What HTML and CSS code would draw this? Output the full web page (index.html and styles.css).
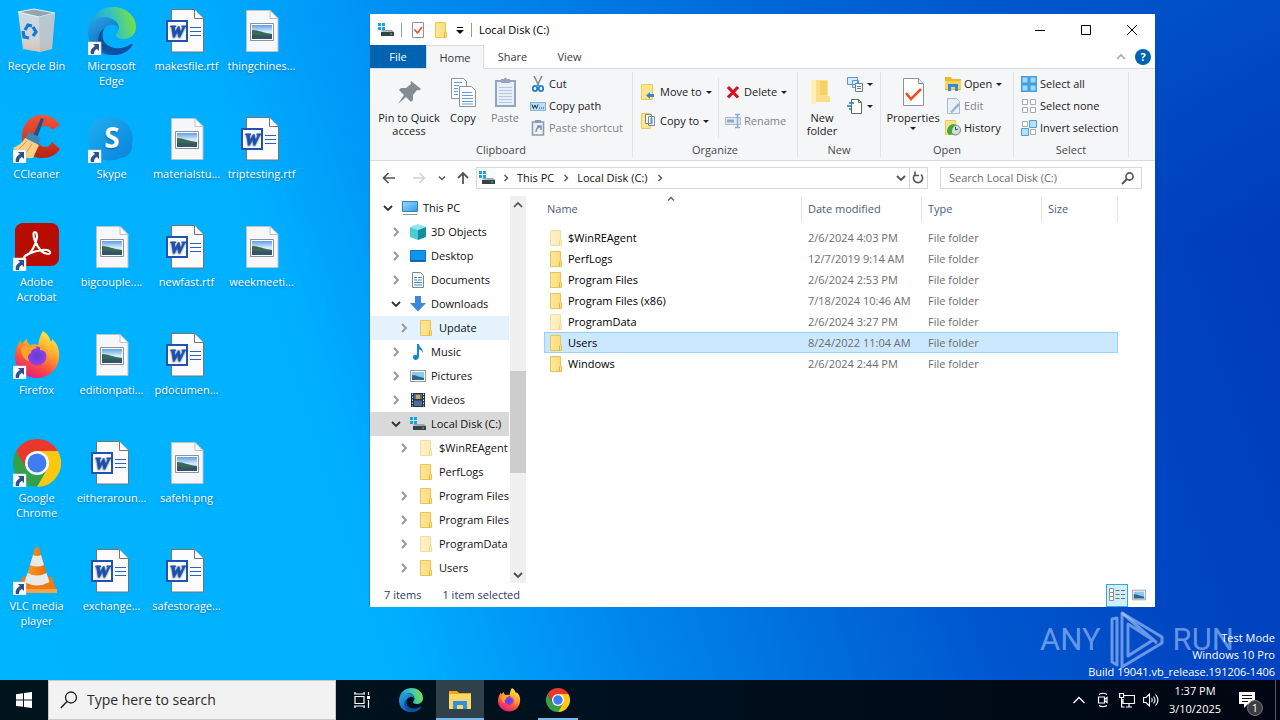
FILE: index.html
```html
<!DOCTYPE html>
<html lang="en">
<head>
<meta charset="utf-8">
<title>Local Disk (C:)</title>
<link rel="stylesheet" href="styles.css">
</head>
<body>
<svg class="sprite" aria-hidden="true">
  <defs>
    <linearGradient id="gEdgeTop" x1="0" x2="1" y1=".6" y2=".4"><stop offset="0" stop-color="#1c9be0"/><stop offset=".5" stop-color="#35c1c0"/><stop offset="1" stop-color="#7be340"/></linearGradient>
    <linearGradient id="gEdgeMid" x1="0" x2=".6" y1="0" y2="1"><stop offset="0" stop-color="#2aa6e6"/><stop offset="1" stop-color="#0b62b8"/></linearGradient>
    <linearGradient id="gFox" x1=".8" x2=".3" y1="0" y2="1"><stop offset="0" stop-color="#fff14a"/><stop offset=".4" stop-color="#ffa52b"/><stop offset=".7" stop-color="#ff4f3e"/><stop offset="1" stop-color="#e31587"/></linearGradient>
    <radialGradient id="gFoxCore"><stop offset="0" stop-color="#5a3fd8"/><stop offset="1" stop-color="#9a3fe0"/></radialGradient>
    <linearGradient id="gSkype" x1="0" x2="1" y1="0" y2="1"><stop offset="0" stop-color="#1fb0f2"/><stop offset="1" stop-color="#0883dc"/></linearGradient>
    <linearGradient id="gBin" x1="0" x2="0" y1="0" y2="1"><stop offset="0" stop-color="#c9dbe6"/><stop offset=".7" stop-color="#cfd4d6"/><stop offset="1" stop-color="#d9c3b4"/></linearGradient>
    <linearGradient id="gRed" x1="0" x2="0" y1="0" y2="1"><stop offset="0" stop-color="#f4553a"/><stop offset="1" stop-color="#b8230f"/></linearGradient>
    <linearGradient id="gCone" x1="0" x2="1"><stop offset="0" stop-color="#ff9d2b"/><stop offset="1" stop-color="#e86800"/></linearGradient>
    <linearGradient id="gSky" x1="0" x2="0" y1="0" y2="1"><stop offset="0" stop-color="#5f9fe6"/><stop offset=".5" stop-color="#dcefff"/><stop offset="1" stop-color="#8fb8d8"/></linearGradient>
    <linearGradient id="gFolder" x1="0" x2="1"><stop offset="0" stop-color="#ffe79c"/><stop offset="1" stop-color="#fbdb78"/></linearGradient>
    <linearGradient id="gScreen" x1="0" x2="1" y1="0" y2="1"><stop offset="0" stop-color="#9adcff"/><stop offset="1" stop-color="#2a9df0"/></linearGradient>
  </defs>

  <symbol id="shortcut" viewBox="0 0 48 48"><path d="M0 35h13v13H0z" fill="#fff" stroke="#c9d3dc" stroke-width=".6"/><path d="M5 37h6v7l-2-2c-2 1-3 2-3 5H3c-1-3 0-5 4-8z" fill="#2f4f8f"/></symbol>
  <symbol id="bin" viewBox="0 0 48 48"><path d="M5 5 21 2l21 4-3 36-12 3-17-3z" fill="url(#gBin)"/><path d="M5 5 21 2l21 4-16 4z" fill="#8fa6b4" stroke="#e4eef4" stroke-width="1.200"/><path d="m26 10 16-4-3 36-12 3z" fill="#a9b9c2" opacity=".55"/><g fill="none" stroke="#1478d0" stroke-width="3.200"><path d="m12 23 3-5 4 1M20 20l3 5-3 4M16 31l-5-1-1-6"/></g></symbol>
  <symbol id="edge" viewBox="0 0 48 48"><path d="M0 25C0 14 8 9 16 10c9 1 15 6 15 11-2-3-6-4-9-3-5 1-8 6-8 12 0 9 7 14 15 16-2 1-4 2-6 2C10 48 0 38 0 25z" fill="url(#gEdgeMid)"/><path d="M16 22c-4 9 1 17 10 19 7 1 13-1 17-4 2-1 2 1 1 2-4 6-12 10-20 9-8-2-14-8-14-15 0-5 2-9 6-11z" fill="#0c52a4"/><path d="M1 19C3 8 13 0 25 0c14 0 23 10 23 20 0 7-5 12-12 12-5 0-8-2-8-4 0-1 3-3 3-7 0-6-6-11-14-11C9 10 3 14 1 19z" fill="url(#gEdgeTop)"/></symbol>
  <symbol id="ccleaner" viewBox="0 0 48 48"><path d="M47 10C41 2 35 0 29 0 17 0 9 10 9 22s9 21 20 21c8 0 14-3 18-9l-8-7c-2 4-4 5-7 5-5 0-8-5-8-11s3-10 8-10c3 0 5 1 7 4z" fill="url(#gRed)"/><path d="M28 3 31 4l-7 19-4-2z" fill="#1f557f"/><path d="m16 17 12 6-3 7-13-6z" fill="#3f86b8"/><path d="M12 23 26 30 20 43C12 44 5 40 0 33 5 31 9 28 12 23z" fill="#f8cf86"/><path d="m6 34 8-8M12 39l7-10" stroke="#d69c4b" fill="none"/></symbol>
  <symbol id="skype" viewBox="0 0 48 48"><path d="M3 12A12 12 0 0 1 16 3 22 22 0 0 1 44 29 12 12 0 0 1 32 43 22 22 0 0 1 3 12z" fill="url(#gSkype)"/><text x="24" y="33" text-anchor="middle" class="logo-s">S</text></symbol>
  <symbol id="acrobat" viewBox="0 0 48 48"><rect x="2" y="0" width="44" height="43" rx="8" fill="#b90c00"/><path d="M12 33c6-2 11-11 12-19 0-3-1-5-2-5-2 0-2 4 0 9 3 7 8 13 13 13 3 0 3-3-1-4-7-1-18 3-22 6-2 2-1 3 0 0z" fill="none" stroke="#fff" stroke-width="2.200" stroke-linejoin="round"/></symbol>
  <symbol id="firefox" viewBox="0 0 48 48"><path d="M30 0c5 3 7 7 8 11 1-1 1-2 1-3 6 5 8 12 7 19-1 12-11 20-22 20S2 38 2 26C2 19 4 14 8 9c0 2 0 3 1 4 1-2 3-4 5-5 0 3 1 5 3 6 3-1 6-1 8 0 1-5 2-10 5-14z" fill="url(#gFox)"/><circle cx="24" cy="25" r="9.500" fill="url(#gFoxCore)"/><path d="M8 17c5-4 11-4 16 0-4 1-6 2-6 5-3 1-4 4-2 8-5-1-8-6-8-13zM27 14c6 1 9 6 8 12-1-4-4-7-8-7z" fill="#ffa22e"/></symbol>
  <symbol id="chrome" viewBox="0 0 48 48"><path d="M13.600 30 3.200 12A24 24 0 0 0 24 48L34.400 30z" fill="#34a04b"/><path d="M24 12h20.800A24 24 0 0 1 24 48l10.400-18z" fill="#fdc80f"/><path d="M24 12h20.800A24 24 0 0 0 3.200 12l10.400 18z" fill="#e8392c"/><circle cx="24" cy="24" r="12" fill="#fff"/><circle cx="24" cy="24" r="9.500" fill="#3f7df0"/></symbol>
  <symbol id="vlc" viewBox="0 0 48 48"><path d="M9 30h30l5 16H5z" fill="#f07a10"/><path d="M5 42h39v4H5z" fill="#ffa24a"/><path d="M22 1q2-2 4 0l10 34q-12 7-24 0z" fill="url(#gCone)"/><path d="m20 8-3 10q7 3 14 0L28 8q-4 2-8 0zM14.500 26l-3 9q12.500 7 25 0l-3-9q-9.500 5-19 0z" fill="#e9e9ea"/></symbol>
  <symbol id="worddoc" viewBox="0 0 48 48"><path d="M8.500 2.500h23l9 9v33.500h-32z" fill="#fcfcfc" stroke="#70757a"/><path d="M31.500 2.500v9h9" fill="#fff" stroke="#70757a"/><path d="M27 20.500h11M27 24.500h11M27 28.500h11" stroke="#2f62b8"/><rect x="4" y="14" width="20" height="20" fill="#fff" stroke="#1f53b0" stroke-width="2"/><text x="14" y="30" text-anchor="middle" class="logo-w">W</text></symbol>
  <symbol id="imgdoc" viewBox="0 0 48 48"><path d="M8.500 3.500H32l8 8v33H8.500z" fill="#f6f7f9" stroke="#b8c2cc"/><path d="M32 3.500v8h8z" fill="#fff" stroke="#b8c2cc"/><path d="M12.500 16.500h23v17h-23z" fill="#fff" stroke="#8c9197"/><path d="M14 18h20v14H14z" fill="url(#gSky)"/><path d="M14 23c6 0 11 3 20 4v5H14z" fill="#3a6a53"/><path d="M14 28c6 0 12 1 20 0v4H14z" fill="#35536a"/></symbol>

  <symbol id="drive" viewBox="0 0 16 16"><path d="M0 1h3v3H0zM4 1h3v3H4zM0 5h3v3H0zM4 5h3v3H4z" fill="#15a5e8"/><path d="m3 9.500 1-1.500h10l2 2z" fill="#9aa4a8"/><path d="M3 10h13v4H3z" fill="#34444a"/><path d="M12 11.500h2v1h-2z" fill="#58d66b"/></symbol>
  <symbol id="folder" viewBox="0 0 16 16"><path d="M2.500.5h10V10h1v5.500h-11z" fill="url(#gFolder)" stroke="#e9c45a"/><path d="M11.500 10.500v5" stroke="#e3b53e"/></symbol>
  <symbol id="proplist" viewBox="0 0 16 16"><path d="M2.500.5h11v15h-11z" fill="#fff" stroke="#8c939a"/><path d="m4.500 7.500 3 3.500 4.500-6" fill="none" stroke="#e4512b" stroke-width="1.700"/></symbol>
  <symbol id="arrow" viewBox="0 0 6 3"><path d="M0 0h6L3 3z" fill="currentColor"/></symbol>
  <symbol id="pin" viewBox="0 0 32 32"><path d="m18 5 10 8-2 1.500-2-.5-4 5 0 5-2 2-5-5-8 7 6-9-5-5 2-2 5 0 5-4-.5-1.500z" fill="#848c94"/></symbol>
  <symbol id="copy" viewBox="0 0 32 32"><g fill="#fff" stroke="#8794a2"><path d="M4.500 2.500h12l3 3v17h-15z"/><path d="M12.500 10.500h12l4 4v16h-16z"/></g><path d="M7 6.500h8M7 9.500h5M7 12.500h4M7 15.500h4M7 18.500h4M15 16.500h10M15 19.500h11M15 22.500h11M15 25.500h11M15 28h11" stroke="#5f9ede"/></symbol>
  <symbol id="paste" viewBox="0 0 32 32"><path d="M7 5h19v25H7z" fill="#e9eff8" stroke="#94a5bf" stroke-width="2"/><path d="M12 3h3q1.500-3 3 0h3v4h-9z" fill="#94a5bf"/><path d="M10 11.500h13M10 14.500h13M10 17.500h13M10 20.500h13M10 23.500h13M10 26.500h13" stroke="#b5c6e0"/></symbol>
  <symbol id="cut" viewBox="0 0 16 16"><path d="m4 0 5 10M12 0 7 10" stroke="#7f8c99" stroke-width="1.600"/><g fill="none" stroke="#2383c8" stroke-width="1.800"><ellipse cx="5" cy="12.500" rx="2.200" ry="2.600"/><ellipse cx="11" cy="12.500" rx="2.200" ry="2.600"/></g></symbol>
  <symbol id="copypath" viewBox="0 0 16 16"><path d="M.5 4.500h15v8H.5z" fill="#b9def8" stroke="#7fb6de"/><path d="m2 6.500 1.500 4L5 7l1.500 3.500L8 6.500" fill="none" stroke="#26333f"/><path d="M9 10h1M11 10h1M13 10h1" stroke="#26333f"/></symbol>
  <symbol id="pasteshort" viewBox="0 0 16 16"><path d="M2.500 2h11v13h-11z" fill="#eef2f8" stroke="#8c9bb3" stroke-width="1.600"/><path d="M5 0h6v3H5z" fill="#8c9bb3"/><path d="M7 6h4v4M11 6c-3 1-5 3-5 6" fill="none" stroke="#8092ad" stroke-width="1.500"/></symbol>
  <symbol id="moveto" viewBox="0 0 16 16"><path d="M.5.5h11v15H.5z" fill="#fde68e" stroke="#eec95a"/><path d="m5 11.500 4-3.500v2h4v3H9v2z" fill="#3a86d6"/></symbol>
  <symbol id="copyto" viewBox="0 0 16 16"><path d="M.5.5h9v15h-9z" fill="#fde68e" stroke="#eec95a"/><path d="M4.500 1.500h6v9h-6zM7.500 3.500h6v9h-6z" fill="#fff" stroke="#7a8896"/><path d="M9 6h3M9 8h3M9 10h3" stroke="#4a94e0"/></symbol>
  <symbol id="delete" viewBox="0 0 16 16"><path d="m3 3 10 10.500M13 3 3 13.500" stroke="#d8101c" stroke-width="3.200"/></symbol>
  <symbol id="rename" viewBox="0 0 16 16"><path d="M.5 4.500h15v7H.5z" fill="#dfe8f4" stroke="#a8b9d0"/><path d="M2 6.500h7v3H2z" fill="#93a8c6"/><path d="M10 1.500h5M12.500 1.500v13M10 14.500h5" stroke="#93a8c6" stroke-width="1.400" fill="none"/></symbol>
  <symbol id="bigfolder" viewBox="0 0 32 32"><path d="M5 4h17v16h2v6H10z" fill="#fbdf86"/><path d="M5 4h5v25l-5-2z" fill="#fff0b8"/><path d="M14 5h7v14H14z" fill="#f6d068"/></symbol>
  <symbol id="newitem" viewBox="0 0 16 16"><path d="M.5 1.500h10v7H.5zM5.500 4.500h6v7h-6z" fill="#d7ebfa" stroke="#4f9bd2"/><path d="M8.500 7.500h7v8h-7z" fill="#fff" stroke="#707a84"/><path d="M10 10.500h4M10 12.500h4" stroke="#707a84"/></symbol>
  <symbol id="easy" viewBox="0 0 16 16"><path d="M4.500 1.500h7l3 3v11h-10z" fill="#fff" stroke="#606a74"/><path d="M11.500 1.500v3h3" fill="none" stroke="#606a74"/><path d="M2 5h5M0 8h5M2 11h2" stroke="#1f7ac0" stroke-width="1.500"/></symbol>
  <symbol id="bigprops" viewBox="0 0 32 32"><path d="M6.500 2.500h15l5 5v22h-20z" fill="#fff" stroke="#8a929a"/><path d="M21.500 2.500v5h5" fill="#e9edf1" stroke="#8a929a"/><path d="m9 17 5 6 10-10" fill="none" stroke="#e4512b" stroke-width="2.600"/></symbol>
  <symbol id="openf" viewBox="0 0 16 16"><path d="M0 1h6l1 2h9v11H0z" fill="#f0b62e"/><path d="M0 5h16v8H0z" fill="#fbd25a"/><path d="M3 15V8h10v7h-3v-4H6v4z" fill="#2d8be0"/></symbol>
  <symbol id="edit" viewBox="0 0 16 16"><path d="M2.500.5h9l3 3v12h-12z" fill="#eaf0fa" stroke="#a9b9d6"/><path d="m5 14 8-9 2 2-8 8z" fill="#9fb2d2"/></symbol>
  <symbol id="history" viewBox="0 0 16 16"><path d="M.5.5h10v14H.5z" fill="#fde58c" stroke="#ecc95c"/><circle cx="10.500" cy="10" r="5" fill="#d8dde0" stroke="#7a848c"/><path d="M10.500 7v3l2.500-1" fill="none" stroke="#49525a"/><path d="M2 12c0-5 3-8 7-8l2 2c-3 0-4 3-4 7l2 1-5 1z" fill="#3daa3f"/></symbol>
  <symbol id="selall" viewBox="0 0 16 16"><path d="M.8.8h6.400v6.400H.8zM8.800.8h6.400v6.400H8.800zM.8 8.800h6.400v6.400H.8zM8.800 8.800h6.400v6.400H8.800z" fill="#9fdcff" stroke="#3d9de0" stroke-width="1.500"/></symbol>
  <symbol id="selnone" viewBox="0 0 16 16"><path d="M1.500 1.500h5v5h-5zM9.500 1.500h5v5h-5zM1.500 9.500h5v5h-5zM9.500 9.500h5v5h-5z" fill="#fff" stroke="#a5abb0"/></symbol>
  <symbol id="selinv" viewBox="0 0 16 16"><path d="M1.500 1.500h5v5h-5zM9.500 9.500h5v5h-5z" fill="#fff" stroke="#a5abb0"/><path d="M8.500.5h7v7h-7zM.5 8.500h7v7h-7z" fill="#b5e0ff" stroke="#4b9fdc"/></symbol>

  <symbol id="pc" viewBox="0 0 16 16"><path d="M.5 1.500h15v10H.5z" fill="url(#gScreen)" stroke="#3d7ea8"/><path d="M1 14.500h14" stroke="#8a949c"/></symbol>
  <symbol id="cube" viewBox="0 0 16 16"><path d="m0 3 8-3 8 3-8 3z" fill="#8fe6ee"/><path d="m0 3 8 3v10l-8-3z" fill="#4bcbd8"/><path d="m16 3-8 3v10l8-3z" fill="#118fa2"/></symbol>
  <symbol id="desk" viewBox="0 0 16 16"><path d="M.5 2.500h15v11H.5z" fill="#0e95f2" stroke="#1372b8"/><path d="M1 12.500h14" stroke="#0b5fa5"/></symbol>
  <symbol id="docs" viewBox="0 0 16 16"><path d="M2.500.5h8l3 3v12h-11z" fill="#fff" stroke="#7e8790"/><path d="M4 5.500h3M8 5.500h4M4 8h3M8 8h4M4 10.500h8M4 13h8" stroke="#4289c4"/></symbol>
  <symbol id="down" viewBox="0 0 16 16"><path d="M5 0h6v7h5l-8 8.500L0 7h5z" fill="#3b87d8"/></symbol>
  <symbol id="music" viewBox="0 0 16 16"><path d="M7 0h2c0 4 5 4 3.500 9C12 6 10 5.500 9 5.500V12c0 5-6 5-6 1.500C3 11 5 10.500 7 11z" fill="#1685d6"/></symbol>
  <symbol id="pics" viewBox="0 0 16 16"><path d="M.5 2.500h15v11H.5z" fill="#fff" stroke="#909aa2"/><path d="M2 4h12v8H2z" fill="#8cc6f4"/><path d="M2 7c4 0 7 2 12 3v2H2z" fill="#2e6684"/></symbol>
  <symbol id="video" viewBox="0 0 16 16"><path d="M1 1h14v14H1z" fill="#2b3138"/><path d="M4 2h8v5H4zM4 8.500h8V14H4z" fill="#4b6ea8"/><path d="M6 3h4v4H6z" fill="#c7a94a"/><path d="M2.500 1.500v13M13.500 1.500v13" stroke="#d9dde0" stroke-dasharray="1.500 1.500"/></symbol>
  <symbol id="chr" viewBox="0 0 16 16"><path d="m6 4 4 4-4 4" fill="none" stroke="currentColor" stroke-width="1.900"/></symbol>
  <symbol id="chd" viewBox="0 0 16 16"><path d="m4 6 4 4 4-4" fill="none" stroke="currentColor" stroke-width="1.900"/></symbol>
  <symbol id="chu" viewBox="0 0 16 16"><path d="m4 10 4-4 4 4" fill="none" stroke="currentColor" stroke-width="1.700"/></symbol>
  <symbol id="left" viewBox="0 0 16 16"><path d="M14 8H3M7.500 3 2.500 8l5 5" fill="none" stroke="currentColor" stroke-width="1.700"/></symbol>
  <symbol id="right" viewBox="0 0 16 16"><path d="M2 8h11M8.500 3l5 5-5 5" fill="none" stroke="currentColor" stroke-width="1.400"/></symbol>
  <symbol id="up" viewBox="0 0 16 16"><path d="M8 14V3M3 8l5-5 5 5" fill="none" stroke="currentColor" stroke-width="1.800"/></symbol>
  <symbol id="refresh" viewBox="0 0 16 16"><path d="M11 4.500a4.600 4.600 0 1 1-6 0M5 1.500v4h4" fill="none" stroke="currentColor" stroke-width="1.600"/></symbol>
  <symbol id="lens" viewBox="0 0 16 16"><circle cx="9.500" cy="6.500" r="3.600" fill="none" stroke="currentColor" stroke-width="1.600"/><path d="m7 9-5 5" stroke="currentColor" stroke-width="2"/></symbol>
</svg>

<div class="screen">
  <main class="desktop">
    <div class="shortcuts">
      <button class="item"><svg><use href="#bin"/></svg><span>Recycle Bin</span></button>
      <button class="item"><svg><use href="#ccleaner"/><use href="#shortcut"/></svg><span>CCleaner</span></button>
      <button class="item"><svg><use href="#acrobat"/><use href="#shortcut"/></svg><span>Adobe Acrobat</span></button>
      <button class="item"><svg><use href="#firefox"/><use href="#shortcut"/></svg><span>Firefox</span></button>
      <button class="item"><svg><use href="#chrome"/><use href="#shortcut"/></svg><span>Google Chrome</span></button>
      <button class="item"><svg><use href="#vlc"/><use href="#shortcut"/></svg><span>VLC media player</span></button>
      <button class="item"><svg><use href="#edge"/><use href="#shortcut"/></svg><span>Microsoft Edge</span></button>
      <button class="item"><svg><use href="#skype"/><use href="#shortcut"/></svg><span>Skype</span></button>
      <button class="item"><svg><use href="#imgdoc"/></svg><span>bigcouple....</span></button>
      <button class="item"><svg><use href="#imgdoc"/></svg><span>editionpati...</span></button>
      <button class="item"><svg><use href="#worddoc"/></svg><span>eitheraroun...</span></button>
      <button class="item"><svg><use href="#worddoc"/></svg><span>exchange...</span></button>
      <button class="item"><svg><use href="#worddoc"/></svg><span>makesfile.rtf</span></button>
      <button class="item"><svg><use href="#imgdoc"/></svg><span>materialstu...</span></button>
      <button class="item"><svg><use href="#worddoc"/></svg><span>newfast.rtf</span></button>
      <button class="item"><svg><use href="#worddoc"/></svg><span>pdocumen...</span></button>
      <button class="item"><svg><use href="#imgdoc"/></svg><span>safehi.png</span></button>
      <button class="item"><svg><use href="#worddoc"/></svg><span>safestorage...</span></button>
      <button class="item"><svg><use href="#imgdoc"/></svg><span>thingchines...</span></button>
      <button class="item"><svg><use href="#worddoc"/></svg><span>triptesting.rtf</span></button>
      <button class="item"><svg><use href="#imgdoc"/></svg><span>weekmeeti...</span></button>
    </div>

    <div class="watermark">
      <span>ANY</span>
      <svg viewBox="0 0 56 60"><g fill="none" stroke="currentColor" stroke-width="3" stroke-linejoin="round"><path d="M8 8 3 9v43l5 3V8z"/><path d="M13 3v54l40-24v-6L13 3z"/><path d="M19 14v32l25-16zM13 3l35 30"/></g></svg>
      <span>RUN</span>
    </div>
    <div class="build"><p>Test Mode</p><p>Windows 10 Pro</p><p>Build 19041.vb_release.191206-1406</p></div>

    <section class="window" aria-label="Local Disk (C:)">
      <header class="titlebar">
        <svg class="i16"><use href="#drive"/></svg>
        <i class="bar first"></i>
        <button aria-label="Properties"><svg class="i16"><use href="#proplist"/></svg></button>
        <button aria-label="New folder"><svg class="i16"><use href="#folder"/></svg></button>
        <button class="more" aria-label="Customize"><svg viewBox="0 0 8 8"><path d="M1 1.500h6" stroke="#111"/><path d="M0 4h8L4 8z" fill="#111"/></svg></button>
        <i class="bar"></i>
        <h1>Local Disk (C:)</h1>
        <div class="caption">
          <button aria-label="Minimize"><svg viewBox="0 0 10 10"><path d="M0 5.500h10" stroke="#000"/></svg></button>
          <button aria-label="Maximize"><svg viewBox="0 0 10 10"><path d="M.5.5h9v9h-9z" stroke="#000" fill="none"/></svg></button>
          <button aria-label="Close"><svg viewBox="0 0 10 10"><path d="m0 0 10 10M10 0 0 10" stroke="#000"/></svg></button>
        </div>
      </header>
      <nav class="tabs">
        <button class="file">File</button><button class="active">Home</button><button>Share</button><button>View</button>
        <span class="tabtools"><button class="collapse" aria-label="Collapse ribbon"><svg class="i16"><use href="#chu"/></svg></button><button class="help" aria-label="Help">?</button></span>
      </nav>

      <div class="ribbon">
        <div class="group g-clip">
          <div class="tools">
            <button class="big w-pin"><svg><use href="#pin"/></svg>Pin to Quick access</button>
            <button class="big w-copy"><svg><use href="#copy"/></svg>Copy</button>
            <button class="big w-paste dim"><svg><use href="#paste"/></svg>Paste</button>
            <div class="stack">
              <button><svg class="i16"><use href="#cut"/></svg>Cut</button>
              <button><svg class="i16"><use href="#copypath"/></svg>Copy path</button>
              <button class="dim"><svg class="i16"><use href="#pasteshort"/></svg>Paste shortcut</button>
            </div>
          </div>
          <h2>Clipboard</h2>
        </div>
        <div class="group g-org">
          <div class="tools">
            <div class="stack two">
              <button><svg class="i16"><use href="#moveto"/></svg>Move to<svg class="arr"><use href="#arrow"/></svg></button>
              <button><svg class="i16"><use href="#copyto"/></svg>Copy to<svg class="arr"><use href="#arrow"/></svg></button>
            </div>
            <div class="stack two split">
              <button><svg class="i16"><use href="#delete"/></svg>Delete<svg class="arr"><use href="#arrow"/></svg></button>
              <button class="dim"><svg class="i16"><use href="#rename"/></svg>Rename</button>
            </div>
          </div>
          <h2>Organize</h2>
        </div>
        <div class="group g-new">
          <div class="tools">
            <button class="big w-new"><svg><use href="#bigfolder"/></svg>New folder</button>
            <div class="stack">
              <button aria-label="New item"><svg class="i16"><use href="#newitem"/></svg><svg class="arr"><use href="#arrow"/></svg></button>
              <button aria-label="Easy access"><svg class="i16"><use href="#easy"/></svg><svg class="arr"><use href="#arrow"/></svg></button>
            </div>
          </div>
          <h2>New</h2>
        </div>
        <div class="group g-open">
          <div class="tools">
            <button class="big w-props"><svg><use href="#bigprops"/></svg>Properties<svg class="arr"><use href="#arrow"/></svg></button>
            <div class="stack">
              <button><svg class="i16"><use href="#openf"/></svg>Open<svg class="arr"><use href="#arrow"/></svg></button>
              <button class="dim"><svg class="i16"><use href="#edit"/></svg>Edit</button>
              <button><svg class="i16"><use href="#history"/></svg>History</button>
            </div>
          </div>
          <h2>Open</h2>
        </div>
        <div class="group g-sel">
          <div class="tools">
            <div class="stack">
              <button><svg class="i16"><use href="#selall"/></svg>Select all</button>
              <button><svg class="i16"><use href="#selnone"/></svg>Select none</button>
              <button><svg class="i16"><use href="#selinv"/></svg>Invert selection</button>
            </div>
          </div>
          <h2>Select</h2>
        </div>
      </div>

      <div class="address">
        <button aria-label="Back"><svg class="i16"><use href="#left"/></svg></button>
        <button class="off" aria-label="Forward"><svg class="i16"><use href="#right"/></svg></button>
        <button class="recent" aria-label="Recent locations"><svg class="i12"><use href="#chd"/></svg></button>
        <button class="goup" aria-label="Up"><svg class="i16"><use href="#up"/></svg></button>
        <div class="path">
          <svg class="i16"><use href="#drive"/></svg>
          <svg class="i12"><use href="#chr"/></svg><a href="#">This PC</a>
          <svg class="i12"><use href="#chr"/></svg><a href="#">Local Disk (C:)</a>
          <svg class="i12"><use href="#chr"/></svg>
          <button class="drop" aria-label="Previous locations"><svg class="i16"><use href="#chd"/></svg></button>
          <button class="reload" aria-label="Refresh"><svg class="i16"><use href="#refresh"/></svg></button>
        </div>
        <label class="search"><input type="text" placeholder="Search Local Disk (C:)" aria-label="Search Local Disk (C:)"><svg class="i16"><use href="#lens"/></svg></label>
      </div>

      <div class="body">
        <ul class="tree">
          <li class="open"><button aria-label="Collapse"><svg class="i16"><use href="#chd"/></svg></button><svg class="i16"><use href="#pc"/></svg>This PC</li>
          <li class="l1"><button aria-label="Expand"><svg class="i16"><use href="#chr"/></svg></button><svg class="i16"><use href="#cube"/></svg>3D Objects</li>
          <li class="l1"><button aria-label="Expand"><svg class="i16"><use href="#chr"/></svg></button><svg class="i16"><use href="#desk"/></svg>Desktop</li>
          <li class="l1"><button aria-label="Expand"><svg class="i16"><use href="#chr"/></svg></button><svg class="i16"><use href="#docs"/></svg>Documents</li>
          <li class="l1 open"><button aria-label="Collapse"><svg class="i16"><use href="#chd"/></svg></button><svg class="i16"><use href="#down"/></svg>Downloads</li>
          <li class="l2 hover"><button aria-label="Expand"><svg class="i16"><use href="#chr"/></svg></button><svg class="i16"><use href="#folder"/></svg>Update</li>
          <li class="l1"><button aria-label="Expand"><svg class="i16"><use href="#chr"/></svg></button><svg class="i16"><use href="#music"/></svg>Music</li>
          <li class="l1"><button aria-label="Expand"><svg class="i16"><use href="#chr"/></svg></button><svg class="i16"><use href="#pics"/></svg>Pictures</li>
          <li class="l1"><button aria-label="Expand"><svg class="i16"><use href="#chr"/></svg></button><svg class="i16"><use href="#video"/></svg>Videos</li>
          <li class="l1 open current"><button aria-label="Collapse"><svg class="i16"><use href="#chd"/></svg></button><svg class="i16"><use href="#drive"/></svg>Local Disk (C:)</li>
          <li class="l2"><button aria-label="Expand"><svg class="i16"><use href="#chr"/></svg></button><svg class="i16 faded"><use href="#folder"/></svg>$WinREAgent</li>
          <li class="l2"><button aria-label="No subfolders"></button><svg class="i16"><use href="#folder"/></svg>PerfLogs</li>
          <li class="l2"><button aria-label="Expand"><svg class="i16"><use href="#chr"/></svg></button><svg class="i16"><use href="#folder"/></svg>Program Files</li>
          <li class="l2"><button aria-label="Expand"><svg class="i16"><use href="#chr"/></svg></button><svg class="i16"><use href="#folder"/></svg>Program Files (x86)</li>
          <li class="l2"><button aria-label="Expand"><svg class="i16"><use href="#chr"/></svg></button><svg class="i16 faded"><use href="#folder"/></svg>ProgramData</li>
          <li class="l2"><button aria-label="Expand"><svg class="i16"><use href="#chr"/></svg></button><svg class="i16"><use href="#folder"/></svg>Users</li>
        </ul>
        <div class="scroll">
          <button aria-label="Scroll up"><svg class="i16"><use href="#chu"/></svg></button>
          <i class="before"></i><i class="thumb"></i><i class="after"></i>
          <button aria-label="Scroll down"><svg class="i16"><use href="#chd"/></svg></button>
        </div>
        <div class="files">
          <table>
            <thead><tr><th class="c-name">Name<svg class="sort"><use href="#chu"/></svg></th><th class="c-mid">Date modified</th><th class="c-mid">Type</th><th class="c-size">Size</th></tr></thead>
            <tbody>
              <tr><td><svg class="i16 faded"><use href="#folder"/></svg>$WinREAgent</td><td>2/6/2024 4:03 PM</td><td>File folder</td><td></td></tr>
              <tr><td><svg class="i16"><use href="#folder"/></svg>PerfLogs</td><td>12/7/2019 9:14 AM</td><td>File folder</td><td></td></tr>
              <tr><td><svg class="i16"><use href="#folder"/></svg>Program Files</td><td>2/6/2024 2:53 PM</td><td>File folder</td><td></td></tr>
              <tr><td><svg class="i16"><use href="#folder"/></svg>Program Files (x86)</td><td>7/18/2024 10:46 AM</td><td>File folder</td><td></td></tr>
              <tr><td><svg class="i16 faded"><use href="#folder"/></svg>ProgramData</td><td>2/6/2024 3:27 PM</td><td>File folder</td><td></td></tr>
              <tr class="selected"><td><svg class="i16"><use href="#folder"/></svg>Users</td><td>8/24/2022 11:04 AM</td><td>File folder</td><td></td></tr>
              <tr><td><svg class="i16"><use href="#folder"/></svg>Windows</td><td>2/6/2024 2:44 PM</td><td>File folder</td><td></td></tr>
            </tbody>
          </table>
        </div>
      </div>
      <footer class="status">
        <span>7 items</span><span>1 item selected</span>
        <div class="views">
          <button class="on" aria-label="Details view"><svg class="i16" viewBox="0 0 16 16"><path d="M.5 1.500h4v12h-4zM.5 5.500h4M.5 9.500h4" fill="#fff" stroke="#a08890"/><path d="M6.500 3.500h4M12 3.500h4M6.500 7.500h4M12 7.500h4M6.500 11.500h4M12 11.500h4" stroke="#6a7076"/></svg></button>
          <button aria-label="Large icons view"><svg class="i14"><use href="#pics"/></svg></button>
        </div>
      </footer>
    </section>
  </main>

  <footer class="taskbar">
    <button class="start" aria-label="Start"><svg class="i16" viewBox="0 0 16 16"><path d="M0 2.200 7 1.300V7.600H0zM8 1.100 16 0v7.600H8zM0 8.500h7v6.300l-7-.9zM8 8.500h8V16l-8-1.100z" fill="#fff"/></svg></button>
    <label class="tasksearch"><svg viewBox="0 0 18 18"><circle cx="11" cy="6.500" r="5.500" fill="none" stroke="#222" stroke-width="1.300"/><path d="M7 10.500.800 17" stroke="#222" stroke-width="1.500"/></svg><input type="text" placeholder="Type here to search" aria-label="Type here to search"></label>
    <div class="apps">
      <button aria-label="Task View"><svg class="i16" viewBox="0 0 16 16"><g fill="none" stroke="#fff" stroke-width="1.200"><path d="M0 2h11M0 14h11M1 4.500h9v7H1zM1 0v2M10 0v2M1 14v2M10 14v2M14.500 0v3M14.500 8v8"/></g><path d="M13 4h3v3h-3z" fill="#fff"/></svg></button>
      <button aria-label="Microsoft Edge"><svg class="i24"><use href="#edge"/></svg></button>
      <button class="active" aria-label="File Explorer"><svg class="i24" viewBox="0 0 24 24"><path d="M1 3h8l2 2h12v16H1z" fill="#f0a51e"/><path d="M1 6h22v15H1z" fill="#fcd767"/><path d="M5 21v-8h14v8h-4v-4H9v4z" fill="#2f8fe0"/></svg></button>
      <button aria-label="Firefox"><svg class="i24"><use href="#firefox"/></svg></button>
      <button class="running" aria-label="Google Chrome"><svg class="i24"><use href="#chrome"/></svg></button>
    </div>
    <div class="tray">
      <button aria-label="Show hidden icons"><svg class="i16" viewBox="0 0 16 16"><path d="m2.500 11 5.500-5.500 5.500 5.500" fill="none" stroke="#fff" stroke-width="1.300"/></svg></button>
      <button aria-label="Meet Now"><svg class="i16" viewBox="0 0 16 16"><g fill="none" stroke="#fff" stroke-width="1.200"><path d="M3.500 5h6v6h-6zM9.500 7.500 12 5.500v5L9.500 8.500M4 2.500q4-2.500 8 0M4 13.500q4 2.500 8 0"/></g></svg></button>
      <button aria-label="Network"><svg class="i16" viewBox="0 0 16 16"><g fill="none" stroke="#fff" stroke-width="1.200"><path d="M5 3.500h10.500v8H4V7M7 15h6M10 11.500V15M.6 1.500h4v4h-4zM2.600 5.500V15h3"/></g></svg></button>
      <button aria-label="Volume"><svg class="i16" viewBox="0 0 16 16"><g fill="none" stroke="#fff" stroke-width="1.100"><path d="M.6 5.500H3L6.500 2v12L3 10.500H.6zM8.500 6q1.500 2 0 4M10.500 4.500q3 3.500 0 7M12.500 2.500q5 5.500 0 11"/></g></svg></button>
      <div class="clock"><span>1:37 PM</span><span>3/10/2025</span></div>
      <button class="notes" aria-label="Notifications"><svg class="i16" viewBox="0 0 16 16"><path d="M0 0h16v12H9l-4 4v-4H0z" fill="#fff"/><path d="M3 3.500h10M3 6.500h10M3 9.500h6" stroke="#111"/></svg><b>1</b></button>
      <button class="peek" aria-label="Show desktop"></button>
    </div>
  </footer>
</div>
</body>
</html>
```
FILE: styles.css
```css
* { box-sizing: border-box; }
body { margin: 0; font: 11px/16px "Open Sans", "Noto Sans", sans-serif; color: #000; }
button { font: inherit; color: inherit; border: 0; background: none; padding: 0; margin: 0; }
h1, h2, p, ul { margin: 0; padding: 0; font: inherit; list-style: none; }
a { color: inherit; text-decoration: none; }
svg { flex: none; display: block; }
i { flex: none; }
.sprite { position: absolute; width: 0; height: 0; }
.i16 { width: 16px; height: 16px; }
.i14 { width: 14px; height: 14px; }
.i12 { width: 12px; height: 12px; }
.i24 { width: 24px; height: 24px; }
.faded { opacity: .55; }
.logo-s { font: bold 28px "Open Sans", sans-serif; fill: #fff; }
.logo-w { font: italic bold 17px "Liberation Serif", serif; fill: #1f53b0; stroke: #1f53b0; stroke-width: 1px; }

.screen { height: 100vh; display: flex; flex-direction: column; overflow: hidden; }
.desktop {
  flex: 1; min-height: 0; position: relative; color: #fff;
  background:
    linear-gradient(#00a0ff33 0, #00a0ff00 35%),
    linear-gradient(72deg, #00b4ff 0, #00b0ff 27%, #0098f6 36%, #0084ea 44%, #006cdc 56%, #0058d0 66%, #0046c2 80%, #0038b6 100%);
}
.shortcuts {
  height: 100%; padding-top: 7px;
  display: grid; grid-auto-flow: column; justify-content: start; align-content: start;
  grid-template-rows: repeat(6, 108px); grid-auto-columns: 75px;
}
.item { display: flex; flex-direction: column; align-items: center; justify-content: flex-start; gap: 3px; padding-right: 2px; line-height: 15px; text-shadow: 0 1px 2px rgba(0, 50, 100, .5); white-space: nowrap; }
.item svg { width: 48px; height: 48px; }
.item span { max-width: 72px; white-space: normal; text-align: center; }

.watermark { position: absolute; left: 1040px; bottom: 10px; display: flex; align-items: center; gap: 8px; color: rgba(190, 215, 255, .55); font: 31px/60px "Roboto", sans-serif; }
.watermark svg { width: 56px; height: 60px; }
.build { position: absolute; right: 5px; bottom: 0; text-align: right; line-height: 17px; }

.window { position: absolute; left: 369px; right: 125px; top: 14px; bottom: 73px; display: flex; flex-direction: column; background: #fff; color: #111; border-left: 1px solid #1b82d2; }
.titlebar { height: 31px; flex: none; display: flex; align-items: center; padding-left: 8px; gap: 7px; }
.titlebar .bar { width: 1px; height: 14px; background: #9a9a9a; }
.titlebar .first { margin-right: 1px; }
.titlebar .more svg { width: 8px; height: 8px; }
.titlebar h1 { font-size: 11px; color: #000; }
.caption { margin-left: auto; display: flex; align-self: stretch; }
.caption button { width: 46px; display: grid; place-items: center; }
.caption svg { width: 10px; height: 10px; }

.tabs { height: 24px; flex: none; display: flex; border-bottom: 1px solid #dadbdc; color: #3b3b3b; }
.tabs > button { width: 57px; }
.tabs .file { width: 56px; background: #0063b1; color: #fff; }
.tabs .active { width: 58px; background: #f5f6f7; border: 1px solid #dadbdc; border-bottom: 0; height: 24px; }
.tabtools { margin-left: auto; display: flex; align-items: center; gap: 6px; padding-right: 4px; }
.collapse { color: #aaa; }
.help { width: 16px; height: 16px; border-radius: 50%; background: #0063b1; color: #fff; font-weight: bold; line-height: 16px; }

.ribbon { flex: none; display: flex; background: #f5f6f7; border-bottom: 1px solid #dadbdc; padding: 3px 0; color: #222; }
.group { display: flex; flex-direction: column; border-right: 1px solid #e1e2e4; }
.g-clip { width: 263px; }
.g-clip .tools, .g-org .tools, .g-sel .tools { padding-left: 7px; }
.g-org { width: 165px; }
.g-new { width: 83px; }
.g-open { width: 133px; }
.g-sel { width: 115px; }
.tools { display: flex; height: 71px; padding: 1px 0 4px; }
.group h2 { text-align: center; line-height: 14px; color: #4a4a4a; }
.big { display: flex; flex-direction: column; align-items: center; line-height: 13px; padding-top: 3px; gap: 3px; }
.big svg { width: 32px; height: 32px; }
.w-pin { width: 64px; }
.w-copy { width: 44px; }
.w-paste { width: 40px; }
.w-new { width: 48px; }
.w-props { width: 64px; }
.stack { display: flex; flex-direction: column; padding-left: 1px; }
.w-props + .stack, .g-sel .stack { padding-left: 0; }
.w-paste + .stack { padding-left: 5px; }
.stack button { height: 22px; display: flex; align-items: center; gap: 3px; white-space: nowrap; }
.two { padding: 8px 0 0 1px; gap: 7px; width: 78px; }
.split { margin: 5px 0 1px; padding-top: 3px; padding-left: 6px; border-left: 1px solid #e1e2e4; }
.arr, .big .arr { width: 6px; height: 3px; color: #222; }
.stack .arr { margin-left: 1px; }
.dim { color: #838383; }

.address { flex: none; height: 35px; display: flex; align-items: center; padding: 0 13px 1px 11px; color: #555; }
.address > button { width: 16px; margin-right: 14px; display: grid; place-items: center; }
.address > .off { color: #d0d0d0; margin-right: 7px; }
.address > .recent, .address > .goup { margin-right: 5px; }
.path { flex: 1; display: flex; align-items: center; gap: 5px; height: 22px; border: 1px solid #d9d9d9; padding-left: 2px; color: #555; line-height: 18px; }
.path a { color: #111; padding-right: 1px; }
.path .drop { margin-left: auto; }
.path .reload { border-left: 1px solid #d9d9d9; height: 20px; width: 18px; margin-left: -5px; }
.search { width: 202px; height: 22px; margin-left: 12px; border: 1px solid #d9d9d9; display: flex; align-items: center; padding: 0 5px 0 8px; }
.search input { flex: 1; min-width: 0; border: 0; padding: 0; font: inherit; background: none; outline: 0; }
.search input::placeholder { color: #6d6d6d; }

.body { flex: 1; min-height: 0; display: flex; }
.tree { width: 139px; overflow: hidden; }
.tree li { height: 24px; display: flex; align-items: center; padding-left: 10px; gap: 5px; white-space: nowrap; }
.tree button { flex: none; width: 17px; height: 16px; color: #9a9a9a; }
.tree .open button { color: #333; }
.tree .l1 { padding-left: 18px; }
.tree .l2 { padding-left: 26px; }
.hover { background: #e5f3ff; }
.current { background: #d9d9d9; }
.scroll { width: 16px; margin-left: 1px; background: #f0f0f0; display: flex; flex-direction: column; color: #505050; }
.scroll button { height: 17px; }
.before { flex: 158 0 0; }
.thumb { flex: 102 0 0; background: #cdcdcd; }
.after { flex: 93 0 0; }
.files { flex: 1; padding: 0 37px 0 18px; }
table { width: 100%; border-collapse: collapse; table-layout: fixed; }
th { position: relative; height: 31px; padding: 0 0 0 6px; text-align: left; vertical-align: top; font-weight: normal; line-height: 26px; color: #4c607a; background: linear-gradient(#e5e5e5, #e5e5e5) right top / 1px 26px no-repeat; }
.c-name { padding-left: 3px; }
.c-mid { width: 120px; }
.c-size { width: 76px; }
.sort { position: absolute; left: 50%; top: -3px; width: 12px; height: 12px; margin-left: -8px; }
td { height: 21px; padding: 0 0 0 6px; color: #6d6d6d; white-space: nowrap; }
td:first-child { display: flex; align-items: center; gap: 4px; padding-left: 4px; color: #000; }
.selected { background: #cce8ff; outline: 1px solid #99d1ff; outline-offset: -1px; }
.status { flex: none; height: 24px; display: flex; align-items: center; gap: 21px; padding: 0 9px 0 14px; color: #2b3a66; }
.views { margin-left: auto; display: flex; align-items: center; gap: 4px; }
.views .on { width: 22px; height: 23px; display: grid; place-items: center; background: #cdeefb; border: 1px solid #3aa7d8; }

.taskbar { flex: none; height: 40px; display: flex; color: #fff; background: linear-gradient(90deg, #00141e, #00101e 50%, #000612); }
.start { width: 48px; display: grid; place-items: center; }
.tasksearch { width: 288px; background: #f2f2f2; border: 1px solid #c8c8c8; display: flex; align-items: center; gap: 9px; padding-left: 11px; }
.tasksearch svg { width: 18px; height: 18px; }
.tasksearch input { border: 0; background: none; padding: 0; outline: 0; font: inherit; font-size: 14px; line-height: 20px; }
.tasksearch input::placeholder { color: #2b2b2b; }
.apps { display: flex; gap: 1px; padding-left: 2px; }
.apps button { width: 48px; display: grid; place-items: center; }
.apps .active { background: #2f414b; box-shadow: inset 0 -2px #76b9ed; }
.apps .running { background: linear-gradient(#76b9ed, #76b9ed) center bottom / 40px 2px no-repeat; }
.tray { margin-left: auto; display: flex; align-items: center; gap: 8px; }
.clock { display: flex; flex-direction: column; align-items: center; line-height: 18px; width: 60px; margin-left: -2px; }
.notes { position: relative; margin-left: 6px; }
.notes b { position: absolute; left: 8px; top: 8px; width: 16px; height: 16px; border-radius: 50%; background: #3a3d42; border: 1px solid #777; font-weight: normal; font-size: 11px; line-height: 14px; }
.peek { width: 5px; height: 40px; margin-left: 12px; border-left: 1px solid #55606a; }
```
